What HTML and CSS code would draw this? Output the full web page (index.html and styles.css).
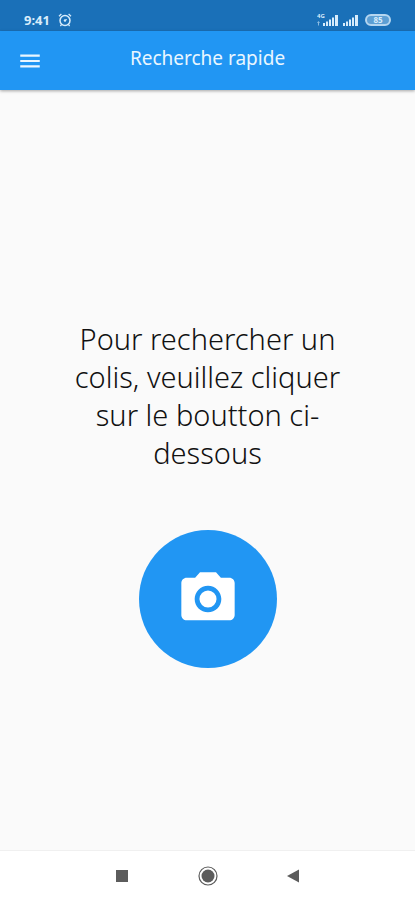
FILE: index.html
```
<!DOCTYPE html>
<html lang="fr">
<head>
  <meta charset="UTF-8">
  <meta name="viewport" content="width=device-width, initial-scale=1">
  <title>Recherche rapide</title>
  <link rel="stylesheet" href="styles.css">
</head>
<body>
  <div class="status-bar">
    <span class="clock">9:41</span>
    <svg class="alarm" width="14" height="14" viewBox="0 0 14 14" fill="none" stroke="currentColor">
      <circle cx="7" cy="7.5" r="5" stroke-width="1.5"/>
      <path d="M1 3.2 3.4 1M13 3.2 10.6 1M3.6 11.4 2.4 13M10.4 11.4 11.6 13" stroke-width="1.3"/>
      <circle cx="7" cy="7.5" r="1.2" fill="currentColor" stroke="none"/>
      <path d="M7 7.5 8.8 6.4" stroke-width="1"/>
    </svg>
    <div class="status-icons">
      <svg width="22" height="14" viewBox="0 0 22 14" fill="currentColor">
        <text class="network" x="0" y="5">4G</text>
        <path d="M1.5 8 3 10H2v2.5H1V10H0z" opacity=".6"/>
        <path d="M6 10h2v3H6zM9 8.5h2V13H9zM12 6.5h2V13h-2zM15 4.5h2V13h-2zM18 2h3v11h-3z"/>
      </svg>
      <svg width="18" height="14" viewBox="0 0 18 14" fill="currentColor">
        <path d="M0 10h2v3H0zM3 8.5h2V13H3zM6 6.5h2V13H6zM9 4.5h2V13H9zM12 2h3v11h-3z"/>
      </svg>
      <span class="battery"><span class="battery-level">85</span></span>
    </div>
  </div>

  <header class="app-bar">
    <button class="menu-button" type="button" aria-label="Menu">
      <svg width="26" height="26" viewBox="0 0 24 24" fill="currentColor">
        <path d="M3 18h18v-2H3v2zm0-5h18v-2H3v2zm0-7v2h18V6H3z"/>
      </svg>
    </button>
    <h1>Recherche rapide</h1>
  </header>

  <main class="content">
    <p class="message">Pour rechercher un colis, veuillez cliquer sur le boutton ci-dessous</p>
    <button class="camera-button" type="button" aria-label="Scanner un colis">
      <svg width="64" height="64" viewBox="0 0 24 24" fill="currentColor">
        <circle cx="12" cy="12" r="3.2"/>
        <path d="M9 2L7.17 4H4c-1.1 0-2 .9-2 2v12c0 1.1.9 2 2 2h16c1.1 0 2-.9 2-2V6c0-1.1-.9-2-2-2h-3.17L15 2H9zm3 15c-2.76 0-5-2.24-5-5s2.24-5 5-5 5 2.24 5 5-2.24 5-5 5z"/>
      </svg>
    </button>
  </main>

  <nav class="nav-bar">
    <button type="button" aria-label="Applications récentes">
      <svg width="20" height="20" viewBox="0 0 20 20"><path d="M4 4h12v12H4z" fill="currentColor"/></svg>
    </button>
    <button type="button" aria-label="Accueil">
      <svg width="20" height="20" viewBox="0 0 20 20">
        <circle cx="10" cy="10" r="9" fill="none" stroke="currentColor" stroke-width="1.2"/>
        <circle cx="10" cy="10" r="6.5" fill="currentColor"/>
      </svg>
    </button>
    <button type="button" aria-label="Retour">
      <svg width="20" height="20" viewBox="0 0 20 20"><path d="M15 3.5v13L3 10z" fill="currentColor"/></svg>
    </button>
  </nav>
</body>
</html>
```
FILE: styles.css
```
* {
  box-sizing: border-box;
}

body {
  margin: 0;
  min-height: 100vh;
  display: flex;
  flex-direction: column;
  background: #fafafa;
  font-family: "Noto Sans", "Open Sans", sans-serif;
}

button {
  border: none;
  padding: 0;
  background: none;
  color: inherit;
  cursor: pointer;
}

svg {
  display: block;
}

.status-bar {
  display: flex;
  align-items: center;
  height: 31px;
  padding: 8px 24px 0;
  background: #1a70b8;
  color: #d8ecfb;
}

.clock {
  font-size: 13px;
  font-weight: 700;
  line-height: 16px;
}

.alarm {
  margin-left: 8px;
}

.status-icons {
  display: flex;
  align-items: center;
  gap: 4px;
  margin-left: auto;
}

.network {
  font-size: 6px;
  font-weight: 700;
}

.battery {
  width: 26px;
  height: 12px;
  padding: 1px 5px;
  border: 2px solid #b5d6f0;
  border-radius: 6px;
  background: #5d9fd4;
}

.battery-level {
  display: block;
  font-size: 8px;
  font-weight: 700;
  line-height: 6px;
  text-align: center;
}

.app-bar {
  display: grid;
  grid-template-columns: 60px 1fr 60px;
  align-items: center;
  height: 59px;
  background: #2196f3;
  color: #e9f6ff;
  box-shadow: 0 1px 3px rgba(0, 0, 0, 0.35);
}

.menu-button {
  display: flex;
  justify-content: center;
}

.app-bar h1 {
  margin: 0;
  padding-bottom: 6px;
  font-size: 19px;
  font-weight: 400;
  line-height: 24px;
  text-align: center;
}

.content {
  flex: 1;
  display: flex;
  flex-direction: column;
  align-items: center;
  justify-content: center;
  gap: 58px;
  padding: 48px 64px 0;
}

.message {
  max-width: 288px;
  margin: 0;
  color: #111;
  font-size: 29px;
  font-weight: 300;
  line-height: 38px;
  text-align: center;
}

.camera-button {
  display: flex;
  align-items: center;
  justify-content: center;
  width: 138px;
  height: 138px;
  border-radius: 50%;
  background: #2196f3;
  color: #fff;
}

.nav-bar {
  display: flex;
  align-items: center;
  justify-content: center;
  gap: 66px;
  height: 50px;
  border-top: 1px solid #f0f0f0;
  background: #fff;
  color: #5c5c5c;
}
```
